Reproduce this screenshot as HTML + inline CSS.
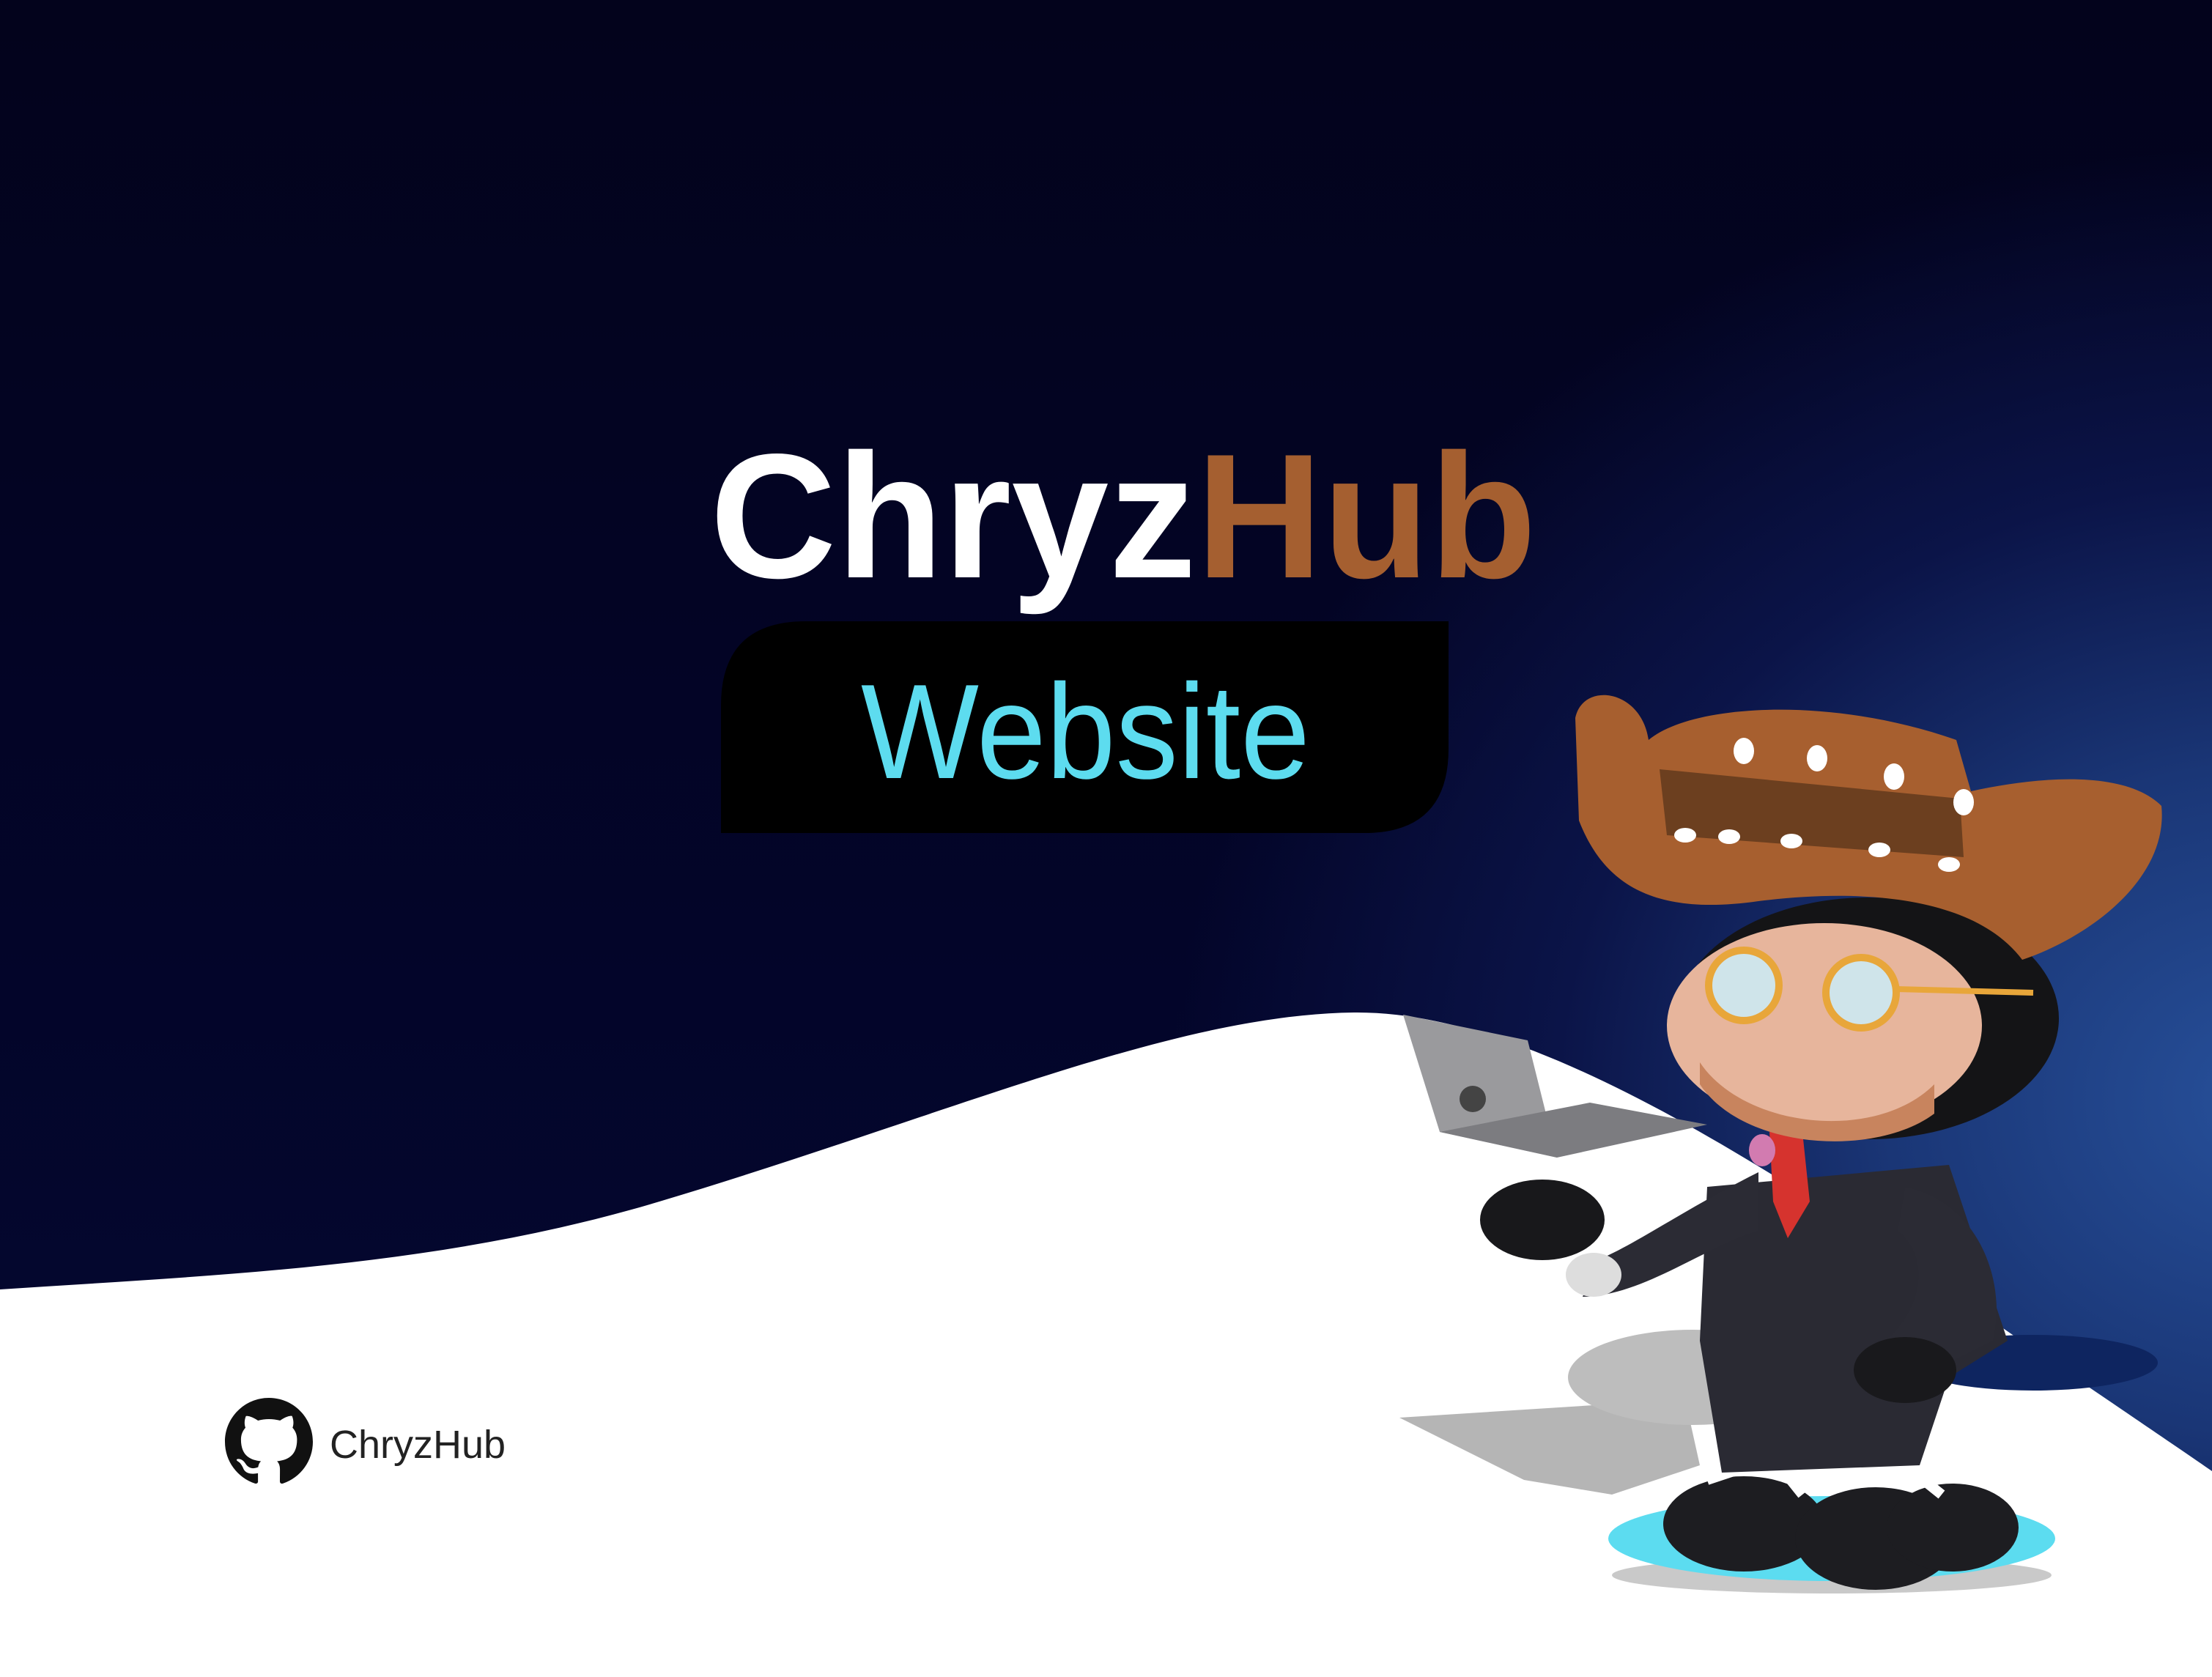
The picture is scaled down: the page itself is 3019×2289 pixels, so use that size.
<!DOCTYPE html>
<html><head><meta charset="utf-8">
<style>
html,body{margin:0;padding:0;}
body{width:3019px;height:2289px;overflow:hidden;position:relative;font-family:"Liberation Sans",sans-serif;
background:#030420;}
#bg{position:absolute;left:0;top:0;width:3019px;height:2289px;
background:
radial-gradient(ellipse 1500px 1300px at 3100px 1500px,#27509a 0%,#1a3676 35%,#0b1448 65%,rgba(3,4,32,0) 100%),
linear-gradient(180deg,#03031c 0%,#03052a 60%,#050a34 100%);}
svg{position:absolute;left:0;top:0;}
</style></head><body>
<div id="bg"></div>
<svg width="3019" height="2289" viewBox="0 0 3019 2289">
<path d="M0 1760 C300 1740 600 1730 900 1640 C1300 1520 1600 1385 1848 1382 C2050 1380 2300 1520 2600 1720 C2800 1860 2950 1960 3019 2008 L3019 2289 L0 2289 Z" fill="#ffffff"/>
<text x="969" y="788" font-family="Liberation Sans" font-weight="bold" font-size="242" textLength="1128" lengthAdjust="spacingAndGlyphs"><tspan fill="#ffffff">Chryz</tspan><tspan fill="#a55f30">Hub</tspan></text>
<path d="M1100 848 L1977 848 L1977 1022 Q1977 1137 1862 1137 L984 1137 L984 963 Q984 848 1100 848 Z" fill="#000"/>
<text x="1175" y="1062" font-family="Liberation Sans" font-size="184" fill="#5ddcef" textLength="613" lengthAdjust="spacingAndGlyphs">Website</text>
<g transform="translate(307,1908) scale(7.5)">
<path fill="#111" d="M8 0C3.58 0 0 3.58 0 8c0 3.54 2.29 6.530 5.47 7.59.4.07.55-.17.55-.38 0-.19-.01-.82-.01-1.49-2.01.37-2.53-.49-2.69-.94-.09-.23-.48-.94-.82-1.13-.28-.15-.68-.52-.01-.53.63-.01 1.08.58 1.23.82.72 1.21 1.87.87 2.33.66.07-.52.28-.87.51-1.07-1.780-.2-3.64-.89-3.64-3.95 0-.87.31-1.59.82-2.15-.08-.2-.36-1.02.08-2.12 0 0 .67-.21 2.2.82.64-.18 1.32-.27 2-.27.68 0 1.36.09 2 .27 1.53-1.04 2.2-.82 2.2-.82.44 1.1.16 1.92.08 2.12.51.56.82 1.27.82 2.15 0 3.07-1.87 3.75-3.65 3.95.29.25.54.73.54 1.48 0 1.07-.01 1.93-.01 2.2 0 .21.15.46.55.38A8.013 8.013 0 0016 8c0-4.42-3.58-8-8-8z"/>
</g>
<text x="450" y="1990" font-family="Liberation Sans" font-size="54" fill="#222">ChryzHub</text>

<path d="M1910 1935 L2300 1910 L2320 2000 L2200 2040 L2080 2020 Z" fill="#b5b5b5"/>
<ellipse cx="2310" cy="1880" rx="170" ry="65" fill="#bdbdbd"/>
<ellipse cx="2775" cy="1860" rx="170" ry="38" fill="#0e2560"/>
<ellipse cx="2500" cy="2150" rx="300" ry="25" fill="#c9c9c9"/>
<ellipse cx="2500" cy="2100" rx="305" ry="58" fill="#5cdcf0"/>
<ellipse cx="2380" cy="2080" rx="110" ry="65" fill="#1d1d21"/>
<ellipse cx="2560" cy="2100" rx="110" ry="70" fill="#1d1d21"/>
<ellipse cx="2665" cy="2085" rx="90" ry="60" fill="#1d1d21"/>
<path d="M2330 2020 L2420 1990 L2460 2040 M2520 2020 L2600 2000 L2650 2040" stroke="#fff" stroke-width="14" fill="none"/>
<path d="M2330 1620 L2660 1590 L2740 1830 L2660 1880 L2620 2000 L2350 2010 L2320 1830 Z" fill="#2a2a33"/>
<path d="M2600 1620 C2700 1640 2740 1750 2720 1830 L2620 1880 L2560 1840 C2620 1800 2640 1720 2590 1680 Z" fill="#2b2b34"/>
<ellipse cx="2600" cy="1870" rx="70" ry="45" fill="#19191c"/>
<path d="M2400 1600 C2300 1650 2230 1700 2180 1720 L2160 1770 C2240 1770 2330 1700 2400 1680 Z" fill="#2b2b34"/>
<ellipse cx="2105" cy="1665" rx="85" ry="55" fill="#18181b"/>
<ellipse cx="2175" cy="1740" rx="38" ry="30" fill="#ddd"/>
<path d="M2415 1545 L2460 1545 L2470 1640 L2440 1690 L2420 1640 Z" fill="#d6332e"/>
<path d="M1915 1385 L2085 1420 L2125 1580 L1965 1545 Z" fill="#9a9a9d"/>
<path d="M1965 1545 L2125 1580 L2330 1535 L2170 1505 Z" fill="#7c7c80"/>
<circle cx="2010" cy="1500" r="18" fill="#444"/>
<ellipse cx="2550" cy="1390" rx="260" ry="165" fill="#141416"/>
<ellipse cx="2490" cy="1400" rx="215" ry="140" fill="#e7b59c"/>
<path d="M2320 1450 C2380 1540 2560 1560 2640 1480 L2640 1520 C2560 1580 2380 1570 2320 1480 Z" fill="#c8845e"/>
<ellipse cx="2405" cy="1570" rx="18" ry="22" fill="#d27bb0"/>
<circle cx="2380" cy="1345" r="48" fill="#cfe4ea" stroke="#e8a63a" stroke-width="10"/>
<circle cx="2540" cy="1355" r="48" fill="#cfe4ea" stroke="#e8a63a" stroke-width="10"/>
<path d="M2588 1350 L2775 1355" stroke="#e8a63a" stroke-width="8"/>
<path d="M2150 980 C2160 930 2240 940 2250 1010 C2310 960 2500 950 2670 1010 L2690 1080 C2780 1060 2900 1050 2950 1100 C2960 1200 2850 1280 2760 1310 C2700 1230 2560 1210 2400 1230 C2260 1250 2190 1210 2155 1120 Z" fill="#a75f2f"/>
<path d="M2265 1050 L2675 1090 L2680 1170 L2275 1140 Z" fill="#6c3f1f"/>
<g fill="#fff">
<ellipse cx="2380" cy="1025" rx="14" ry="18"/><ellipse cx="2480" cy="1035" rx="14" ry="18"/><ellipse cx="2585" cy="1060" rx="14" ry="18"/><ellipse cx="2680" cy="1095" rx="14" ry="18"/>
<ellipse cx="2300" cy="1140" rx="15" ry="10"/><ellipse cx="2360" cy="1142" rx="15" ry="10"/><ellipse cx="2445" cy="1148" rx="15" ry="10"/><ellipse cx="2565" cy="1160" rx="15" ry="10"/><ellipse cx="2660" cy="1180" rx="15" ry="10"/>
</g>
</svg>
</body></html>
